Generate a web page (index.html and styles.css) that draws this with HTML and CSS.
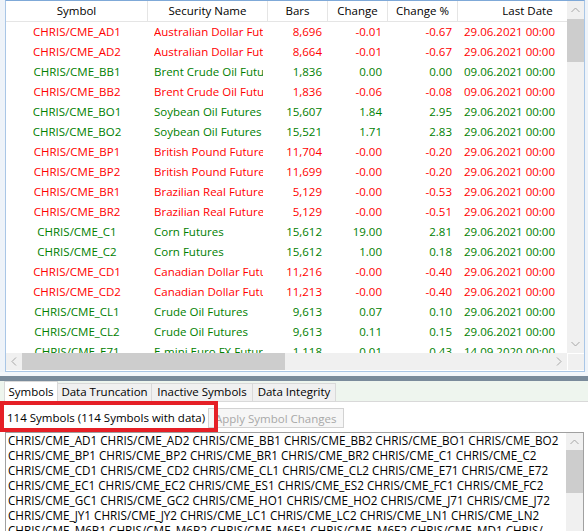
FILE: index.html
```html
<!DOCTYPE html>
<html>
<head>
<meta charset="utf-8">
<link rel="stylesheet" href="styles.css">
</head>
<body>
<div class="app">
  <div class="pane-top">
    <div class="list">
      <div class="viewport">
        <div class="grid hdr">
          <div class="h">Symbol</div>
          <div class="h">Security Name</div>
          <div class="h">Bars</div>
          <div class="h">Change</div>
          <div class="h">Change %</div>
          <div class="h">Last Date</div>
        </div>
        <div class="rows">
          <div class="grid row red"><div class="sym">CHRIS/CME_AD1</div><div class="name"><span>Australian Dollar Futures</span></div><div class="num">8,696</div><div class="num">-0.01</div><div class="num">-0.67</div><div class="date">29.06.2021 00:00</div></div>
          <div class="grid row red"><div class="sym">CHRIS/CME_AD2</div><div class="name"><span>Australian Dollar Futures</span></div><div class="num">8,664</div><div class="num">-0.01</div><div class="num">-0.67</div><div class="date">29.06.2021 00:00</div></div>
          <div class="grid row green"><div class="sym">CHRIS/CME_BB1</div><div class="name"><span>Brent Crude Oil Futures</span></div><div class="num">1,836</div><div class="num">0.00</div><div class="num">0.00</div><div class="date">09.06.2021 00:00</div></div>
          <div class="grid row red"><div class="sym">CHRIS/CME_BB2</div><div class="name"><span>Brent Crude Oil Futures</span></div><div class="num">1,836</div><div class="num">-0.06</div><div class="num">-0.08</div><div class="date">09.06.2021 00:00</div></div>
          <div class="grid row green"><div class="sym">CHRIS/CME_BO1</div><div class="name"><span>Soybean Oil Futures</span></div><div class="num">15,607</div><div class="num">1.84</div><div class="num">2.95</div><div class="date">29.06.2021 00:00</div></div>
          <div class="grid row green"><div class="sym">CHRIS/CME_BO2</div><div class="name"><span>Soybean Oil Futures</span></div><div class="num">15,521</div><div class="num">1.71</div><div class="num">2.83</div><div class="date">29.06.2021 00:00</div></div>
          <div class="grid row red"><div class="sym">CHRIS/CME_BP1</div><div class="name"><span>British Pound Futures</span></div><div class="num">11,704</div><div class="num">-0.00</div><div class="num">-0.20</div><div class="date">29.06.2021 00:00</div></div>
          <div class="grid row red"><div class="sym">CHRIS/CME_BP2</div><div class="name"><span>British Pound Futures</span></div><div class="num">11,699</div><div class="num">-0.00</div><div class="num">-0.20</div><div class="date">29.06.2021 00:00</div></div>
          <div class="grid row red"><div class="sym">CHRIS/CME_BR1</div><div class="name"><span>Brazilian Real Futures</span></div><div class="num">5,129</div><div class="num">-0.00</div><div class="num">-0.53</div><div class="date">29.06.2021 00:00</div></div>
          <div class="grid row red"><div class="sym">CHRIS/CME_BR2</div><div class="name"><span>Brazilian Real Futures</span></div><div class="num">5,129</div><div class="num">-0.00</div><div class="num">-0.51</div><div class="date">29.06.2021 00:00</div></div>
          <div class="grid row green"><div class="sym">CHRIS/CME_C1</div><div class="name"><span>Corn Futures</span></div><div class="num">15,612</div><div class="num">19.00</div><div class="num">2.81</div><div class="date">29.06.2021 00:00</div></div>
          <div class="grid row green"><div class="sym">CHRIS/CME_C2</div><div class="name"><span>Corn Futures</span></div><div class="num">15,612</div><div class="num">1.00</div><div class="num">0.18</div><div class="date">29.06.2021 00:00</div></div>
          <div class="grid row red"><div class="sym">CHRIS/CME_CD1</div><div class="name"><span>Canadian Dollar Futures</span></div><div class="num">11,216</div><div class="num">-0.00</div><div class="num">-0.40</div><div class="date">29.06.2021 00:00</div></div>
          <div class="grid row red"><div class="sym">CHRIS/CME_CD2</div><div class="name"><span>Canadian Dollar Futures</span></div><div class="num">11,213</div><div class="num">-0.00</div><div class="num">-0.40</div><div class="date">29.06.2021 00:00</div></div>
          <div class="grid row green"><div class="sym">CHRIS/CME_CL1</div><div class="name"><span>Crude Oil Futures</span></div><div class="num">9,613</div><div class="num">0.07</div><div class="num">0.10</div><div class="date">29.06.2021 00:00</div></div>
          <div class="grid row green"><div class="sym">CHRIS/CME_CL2</div><div class="name"><span>Crude Oil Futures</span></div><div class="num">9,613</div><div class="num">0.11</div><div class="num">0.15</div><div class="date">29.06.2021 00:00</div></div>
          <div class="grid row green"><div class="sym">CHRIS/CME_E71</div><div class="name"><span>E-mini Euro FX Futures</span></div><div class="num">1,118</div><div class="num">0.01</div><div class="num">0.43</div><div class="date">14.09.2020 00:00</div></div>
        </div>
      </div>
      <div class="vscroll">
        <div class="arrow"><svg width="9" height="6" viewBox="0 0 9 6"><polyline points="0.5,5 4.5,1 8.5,5" fill="none" stroke="#a6a6a6" stroke-width="1"/></svg></div>
        <div class="vthumb"></div>
        <div class="vtrack"></div>
        <div class="arrow"><svg width="9" height="6" viewBox="0 0 9 6"><polyline points="0.5,1 4.5,5 8.5,1" fill="none" stroke="#a6a6a6" stroke-width="1"/></svg></div>
      </div>
      <div class="hscroll">
        <div class="harrow"><svg width="6" height="9" viewBox="0 0 6 9"><polyline points="5,0.5 1,4.5 5,8.5" fill="none" stroke="#a6a6a6" stroke-width="1"/></svg></div>
        <div class="hthumb"></div>
        <div class="htrack"></div>
        <div class="harrow"><svg width="6" height="9" viewBox="0 0 6 9"><polyline points="1,0.5 5,4.5 1,8.5" fill="none" stroke="#a6a6a6" stroke-width="1"/></svg></div>
      </div>
      <div class="corner"></div>
    </div>
  </div>
  <div class="gap"></div>
  <div class="splitter"></div>
  <div class="tabs">
    <div class="tab active">Symbols</div>
    <div class="tab t2">Data Truncation</div>
    <div class="tab t3">Inactive Symbols</div>
    <div class="tab t4">Data Integrity</div>
  </div>
  <div class="panel">
    <div class="status">
      <span class="count">114 Symbols (114 Symbols with data)</span>
      <button class="apply" disabled>Apply Symbol Changes</button>
    </div>
    <div class="callout"></div>
    <div class="textbox">
      <div class="tb-text">
        <div>CHRIS/CME_AD1 CHRIS/CME_AD2 CHRIS/CME_BB1 CHRIS/CME_BB2 CHRIS/CME_BO1 CHRIS/CME_BO2</div>
        <div>CHRIS/CME_BP1 CHRIS/CME_BP2 CHRIS/CME_BR1 CHRIS/CME_BR2 CHRIS/CME_C1 CHRIS/CME_C2</div>
        <div>CHRIS/CME_CD1 CHRIS/CME_CD2 CHRIS/CME_CL1 CHRIS/CME_CL2 CHRIS/CME_E71 CHRIS/CME_E72</div>
        <div>CHRIS/CME_EC1 CHRIS/CME_EC2 CHRIS/CME_ES1 CHRIS/CME_ES2 CHRIS/CME_FC1 CHRIS/CME_FC2</div>
        <div>CHRIS/CME_GC1 CHRIS/CME_GC2 CHRIS/CME_HO1 CHRIS/CME_HO2 CHRIS/CME_J71 CHRIS/CME_J72</div>
        <div>CHRIS/CME_JY1 CHRIS/CME_JY2 CHRIS/CME_LC1 CHRIS/CME_LC2 CHRIS/CME_LN1 CHRIS/CME_LN2</div>
        <div>CHRIS/CME_M6B1 CHRIS/CME_M6B2 CHRIS/CME_M6E1 CHRIS/CME_M6E2 CHRIS/CME_MD1 CHRIS/</div>
      </div>
      <div class="vscroll2">
        <div class="arrow2"><svg width="9" height="6" viewBox="0 0 9 6"><polyline points="0.5,5 4.5,1 8.5,5" fill="none" stroke="#a6a6a6" stroke-width="1"/></svg></div>
        <div class="vthumb2"></div>
        <div class="vtrack"></div>
      </div>
    </div>
  </div>
</div>
</body>
</html>
```
FILE: styles.css
```css
* { box-sizing: border-box; }
html, body { margin: 0; padding: 0; }
body {
  width: 588px;
  height: 531px;
  overflow: hidden;
  background: #ffffff;
  font-family: "Open Sans", "Noto Sans", sans-serif;
  font-size: 11.5px;
  color: #000;
}
.app { width: 588px; height: 531px; position: relative; overflow: hidden; }

.pane-top {
  background: #eef3f9;
  padding: 0 3px 0 5px;
}
.list {
  height: 372px;
  border: 1px solid #a9c6e6;
  border-top-color: #7fa9d8;
  background: #fff;
  display: grid;
  grid-template-columns: 561px 17px;
  grid-template-rows: 352px 17px;
}
.viewport { overflow: hidden; background: #fff; }
.grid {
  display: grid;
  grid-template-columns: 142px 120px 60px 60px 70px 140px;
  width: 592px;
}
.hdr {
  height: 21px;
  border-bottom: 1px solid #e5e5e5;
}
.h {
  line-height: 20px;
  text-align: center;
  border-right: 1px solid #e5e5e5;
  white-space: nowrap;
}
.row { height: 20px; line-height: 20px; white-space: nowrap; }
.red { color: #ff0000; }
.green { color: #008000; }
.sym { text-align: center; }
.name { padding-left: 6px; }
.name span { display: block; width: 109px; overflow: hidden; white-space: nowrap; }
.num { text-align: right; padding-right: 6px; }
.date { padding-left: 6px; }

.vscroll {
  background: #f0f0f0;
  display: flex;
  flex-direction: column;
}
.arrow { height: 18px; display: flex; align-items: center; justify-content: center; }
.vthumb { height: 43px; background: #cdcdcd; }
.vtrack { flex: 1; }
.hscroll {
  background: #f0f0f0;
  display: flex;
  align-items: stretch;
}
.harrow { width: 16px; display: flex; align-items: center; justify-content: center; }
.hthumb { width: 263px; background: #cdcdcd; }
.htrack { flex: 1; }
.corner { background: #f0f0f0; border-left: 1px solid #fff; border-top: 1px solid #fff; }

.gap { height: 4px; background: #f4f7fb; }
.splitter { height: 5px; background: #7a8b9b; }
.tabs {
  height: 21px;
  background: #eef5ee;
  border-bottom: 1px solid #d9d9d9;
  display: flex;
  align-items: flex-end;
  padding-left: 4px;
}
.tab {
  height: 18px;
  line-height: 16px;
  border: 1px solid #d9d9d9;
  border-bottom: none;
  border-left: none;
  background: #f0f0f0;
  text-align: center;
  white-space: nowrap;
}
.tab.active {
  width: 54px;
  height: 21px;
  line-height: 20px;
  background: #fff;
  border-left: 1px solid #d9d9d9;
  margin-bottom: -1px;
}
.t2 { width: 94px; }
.t3 { width: 101px; }
.t4 { width: 83px; }

.panel { background: #fff; position: relative; }
.status {
  height: 30px;
  display: flex;
  align-items: center;
  padding-left: 7px;
}
.count { width: 201px; white-space: nowrap; }
.apply {
  width: 136px;
  height: 20px;
  margin-top: 2px;
  font: inherit;
  color: #a8a8a8;
  background: #f6f6f6;
  border: 1px solid #d2d2d2;
  padding: 0 0 0 6px;
  text-align: left;
  white-space: nowrap;
  overflow: hidden;
}
.callout {
  position: absolute;
  left: 0;
  top: -1px;
  width: 218px;
  height: 31px;
  border: 4px solid #e51f26;
}
.textbox {
  margin-left: 5px;
  width: 579px;
  height: 110px;
  border: 1px solid #a0a0a0;
  display: flex;
  background: #fff;
}
.tb-text {
  flex: 1;
  padding-left: 2px;
  font-size: 11.7px;
  line-height: 15px;
  white-space: nowrap;
  overflow: hidden;
}
.vscroll2 {
  width: 17px;
  background: #f0f0f0;
  display: flex;
  flex-direction: column;
}
.arrow2 { height: 17px; display: flex; align-items: center; justify-content: center; }
.vthumb2 { height: 43px; background: #cdcdcd; }
```
